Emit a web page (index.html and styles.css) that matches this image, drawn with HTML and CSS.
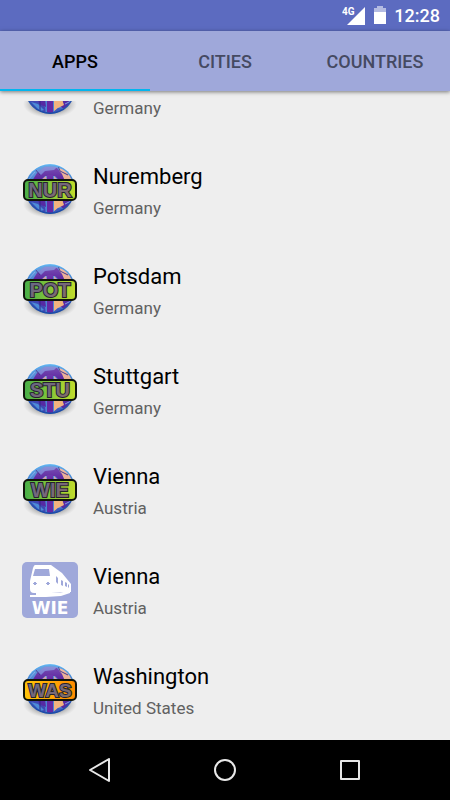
FILE: index.html
```html
<!DOCTYPE html>
<html lang="en">
<head>
<meta charset="utf-8">
<meta name="viewport" content="width=device-width, initial-scale=1">
<title>Apps</title>
<link rel="stylesheet" href="styles.css">
</head>
<body>
<svg class="defs" aria-hidden="true">
  <defs>
    <radialGradient id="shadow"><stop offset=".65" stop-color="#777" stop-opacity=".5"/><stop offset="1" stop-color="#999" stop-opacity="0"/></radialGradient>
    <linearGradient id="rim" x1="0" y1="0" x2="0" y2="1"><stop offset="0" stop-color="#58b2f2"/><stop offset=".5" stop-color="#3562bb"/><stop offset="1" stop-color="#1749a6"/></linearGradient>
    <linearGradient id="shine" x1="0" y1="0" x2="0" y2="1"><stop offset="0" stop-color="#fff" stop-opacity=".25"/><stop offset="1" stop-color="#fff" stop-opacity="0"/></linearGradient>
    <linearGradient id="green"><stop offset="0" stop-color="#46ae48"/><stop offset="1" stop-color="#c3dd2b"/></linearGradient>
    <linearGradient id="orange"><stop offset="0" stop-color="#ffc50a"/><stop offset="1" stop-color="#ff8a00"/></linearGradient>
    <linearGradient id="letters" x1="0" y1="0" x2="1" y2="1"><stop offset="0" stop-color="#666a85"/><stop offset=".5" stop-color="#75677b"/><stop offset="1" stop-color="#85705f"/></linearGradient>
    <clipPath id="disc"><circle cx="28" cy="27" r="24"/></clipPath>
    <g id="globe">
      <ellipse cx="28" cy="42" rx="27" ry="14" fill="url(#shadow)"/>
      <circle cx="28" cy="27" r="25" fill="url(#rim)"/>
      <g clip-path="url(#disc)">
        <path fill="#4a86d4" d="M4 3h48v49H4z"/>
        <path fill="#e9ac90" d="M37 6l8 3 6 10H40l-3-7z"/>
        <path fill="#5b25a0" d="M10 19l5-8 8-5h12l5 6 3 7h-5l-5-5H23l-5 5z"/>
        <path fill="#6f74cf" d="M16 10l7-5h12l-3 3-9 1-4 4z"/>
        <path fill="#d99aa8" d="M18 19l6-5 1 5zM32 14l5 5h-5z"/>
        <path fill="#3f48b4" d="M4 37h12l7 8 1 8H8z"/>
        <path fill="#4b8cd6" d="M9 40l7 2 6 6-4 1z"/>
        <path fill="#562aa3" d="M14 37h9l1 8-5-2zM42 37h11l-8 13-7-6z"/>
        <path fill="#6529a5" d="M25 13h6v40h-6z"/>
        <path fill="#f2b37e" d="M32 37h8l2 6-6 3-4 4z"/>
        <path fill="#3c5cbb" d="M31 50l5-4 8 1-9 6h-4z"/>
        <path fill="none" stroke="#77a6e6" d="M6 18l7-8M43 42l6-3"/>
        <path fill="none" stroke="#302486" d="M13 7l5 6M18 39v12M36 4l2 5 8 4"/>
      </g>
      <path fill="url(#shine)" d="M5 18a24 24 0 0 1 46 0z"/>
      <circle cx="28" cy="27" r="24" fill="none" stroke="url(#rim)" stroke-width="1"/>
    </g>
  </defs>
</svg>
<header class="status">
  <svg class="signal" viewBox="0 0 24 22" role="img" aria-label="4G signal"><path fill="#fff" d="M23 2v18H5z"/><path fill="#5c6bc0" d="M0 0h13v11H0z"/><text class="network" x="0" y="10">4G</text></svg>
  <svg class="battery" viewBox="0 0 12 20" role="img" aria-label="Battery"><path fill="#b4bbe2" d="M3 0h6v2h3v5H0V2h3z"/><path fill="#fff" d="M0 6h12v12H0z"/></svg>
  <time>12:28</time>
</header>
<nav class="tabs">
  <button class="tab active" type="button">APPS</button>
  <button class="tab" type="button">CITIES</button>
  <button class="tab" type="button">COUNTRIES</button>
</nav>
<main class="viewport">
  <ul class="list">
    <li class="row partial"><svg class="icon" viewBox="0 0 56 56"><use href="#globe"/></svg><div><p>Germany</p></div></li>
    <li class="row"><svg class="icon" viewBox="0 0 56 56"><use href="#globe"/><rect class="plate" x="2" y="18" width="52" height="20" rx="4" fill="url(#green)"/><text class="code" x="28" y="35">NUR</text></svg><div><h2>Nuremberg</h2><p>Germany</p></div></li>
    <li class="row"><svg class="icon" viewBox="0 0 56 56"><use href="#globe"/><rect class="plate" x="2" y="18" width="52" height="20" rx="4" fill="url(#green)"/><text class="code" x="28" y="35">POT</text></svg><div><h2>Potsdam</h2><p>Germany</p></div></li>
    <li class="row"><svg class="icon" viewBox="0 0 56 56"><use href="#globe"/><rect class="plate" x="2" y="18" width="52" height="20" rx="4" fill="url(#green)"/><text class="code" x="28" y="35">STU</text></svg><div><h2>Stuttgart</h2><p>Germany</p></div></li>
    <li class="row"><svg class="icon" viewBox="0 0 56 56"><use href="#globe"/><rect class="plate" x="2" y="18" width="52" height="20" rx="4" fill="url(#green)"/><text class="code" x="28" y="35">WIE</text></svg><div><h2>Vienna</h2><p>Austria</p></div></li>
    <li class="row"><svg class="icon" viewBox="0 0 56 56"><rect width="56" height="56" rx="5" fill="#9fa8da"/><path fill="#fff" fill-rule="evenodd" d="M13 3h16l11 8 9 11v8l-20 1H12q-4 0-4-4v-8l3-13q1-3 2-3zm0 4-2 7h17l-1-7zM11 21h1v-1h2v1h1v1h-1v1h-2v-1h-1zm13 0h1v-1h2v1h1v1h-1v1h-2v-1h-1zM34 14v6l2 2v-6zm5 4v5l2 1v-5zm4 2v4l2 1v-4zm3 2v3l1 1v-3z"/><path fill="#fff" d="M14 30h11v1h13l10-3v3l-9 3-15 1H8v-2h6z"/><text class="train-code" x="28" y="52">WIE</text></svg><div><h2>Vienna</h2><p>Austria</p></div></li>
    <li class="row"><svg class="icon" viewBox="0 0 56 56"><use href="#globe"/><rect class="plate" x="2" y="18" width="52" height="20" rx="4" fill="url(#orange)"/><text class="code wide" x="28" y="35">WAS</text></svg><div><h2>Washington</h2><p>United States</p></div></li>
  </ul>
</main>
<footer class="system">
  <button type="button" aria-label="Back"><svg viewBox="0 0 24 24"><path d="M21 1v22L2 12z"/></svg></button>
  <button type="button" aria-label="Home"><svg viewBox="0 0 24 24"><circle cx="12" cy="12" r="10"/></svg></button>
  <button type="button" aria-label="Recent apps"><svg viewBox="0 0 24 24"><path d="M3 3h18v18H3z"/></svg></button>
</footer>
</body>
</html>
```

FILE: styles.css
```css
* { box-sizing: border-box; }
body {
  margin: 0;
  height: 100vh;
  display: flex;
  flex-direction: column;
  font-family: Roboto, sans-serif;
  background: #eee;
  color: #000;
}
h2, p, ul { margin: 0; padding: 0; }
button { border: 0; padding: 0; background: none; font: inherit; }
.defs { position: absolute; width: 0; height: 0; }
.status {
  flex: none;
  height: 31px;
  padding: 0 10px;
  display: flex;
  align-items: center;
  justify-content: flex-end;
  gap: 8px;
  background: #5c6bc0;
  color: #fff;
  font-size: 18px;
  font-weight: 500;
  line-height: 32px;
}
.signal { width: 24px; height: 22px; }
.network { font-size: 10px; font-weight: 700; fill: #fff; }
.battery { width: 12px; height: 20px; }
.tabs {
  flex: none;
  height: 60px;
  display: grid;
  grid-template-columns: repeat(3, 1fr);
  background: #9fa8da;
  box-shadow: 0 1px 4px rgba(0, 0, 0, .5);
}
.tab {
  border-top: 2px solid transparent;
  border-bottom: 2px solid transparent;
  color: #454a62;
  font-size: 18px;
  font-weight: 500;
}
.tab.active { color: #000; border-bottom-color: #03b5ee; }
.viewport {
  flex: 1;
  min-height: 0;
  padding-top: 10px;
}
.list {
  height: 100%;
  overflow: hidden;
  display: flex;
  flex-direction: column;
  justify-content: flex-end;
  list-style: none;
}
.row {
  flex: none;
  height: 100px;
  padding: 0 22px;
  display: flex;
  align-items: center;
  gap: 15px;
}
.row div { padding-top: 3px; }
.partial div { padding-top: 35px; }
.icon { flex: none; width: 56px; height: 56px; }
.plate { stroke: #10140b; stroke-width: 2px; }
.code {
  font: 700 20px "Liberation Sans", sans-serif;
  text-anchor: middle;
  fill: url(#letters);
  stroke: #25232d;
  stroke-width: 2px;
  paint-order: stroke;
}
.wide { font-size: 19px; }
.train-code {
  font: 700 17px "DejaVu Sans", sans-serif;
  text-anchor: middle;
  fill: #fff;
}
.row h2 { font-size: 22px; font-weight: 400; line-height: 32px; }
.row p { font-size: 17px; line-height: 30px; color: #616161; }
.system {
  flex: none;
  height: 60px;
  padding: 0 37px;
  display: grid;
  grid-template-columns: repeat(3, 1fr);
  background: #000;
}
.system button { display: grid; place-items: center; }
.system svg {
  width: 24px;
  height: 24px;
  fill: none;
  stroke: #e8e8e8;
  stroke-width: 2px;
  stroke-linejoin: round;
}
```
